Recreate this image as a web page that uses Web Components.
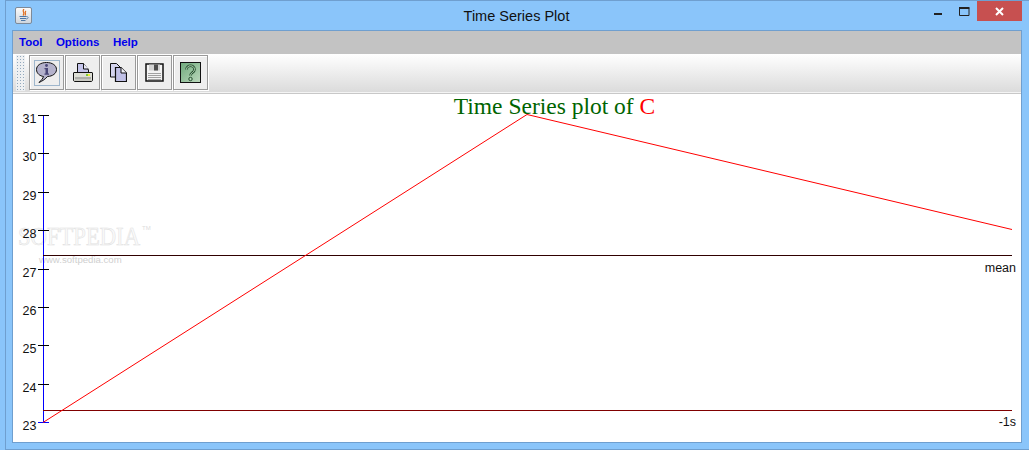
<!DOCTYPE html>
<html>
<head>
<meta charset="utf-8">
<title>Time Series Plot</title>
<style>
  html, body { margin: 0; padding: 0; background: #8ac5fa; }
  body { width: 1029px; height: 450px; overflow: hidden; }
</style>
</head>
<body>
<app-window>
  <title-bar slot="title">Time Series Plot</title-bar>
  <menu-bar slot="menu">
    <span>Tool</span>
    <span>Options</span>
    <span>Help</span>
  </menu-bar>
  <tool-bar slot="tools">
    <tool-button active>
      <svg width="21" height="21" viewBox="0 0 21 21">
        <path d="M10.500 .5C4.500 .5 .5 3.500 .5 7.500C.5 11.500 4 14 7.500 14.500C7 16.500 5 18.500 3 20.500C6.500 19 9.500 17 11.500 14.500C16.500 14.300 20.500 11.500 20.500 7.500C20.500 3.500 16.500 .5 10.500 .5Z" fill="#b4b2cc" stroke="#111"/>
        <circle cx="10.500" cy="3.500" r="1.400" fill="#4a4778"/>
        <path d="M8.500 6h3.500v5.500h1v1.200H8.500v-1.200h1V7.200h-1Z" fill="#4a4778"/>
      </svg>
    </tool-button>
    <tool-button>
      <svg width="20" height="20" viewBox="0 0 20 20">
        <path d="M4.500 .5H10.500L15.500 7V9.500H4.500Z" fill="#c4c4ea" stroke="#111"/>
        <path d="M10.500 .5V6H15.500" fill="#e9e9f7" stroke="#111"/>
        <path d="M1 9.500H19C19.400 9.500 19.500 9.800 19.500 10V17C19.500 17.700 19.200 18.500 18 18.500H2C.8 18.500 .5 17.700 .5 17V10C.5 9.800.6 9.500 1 9.500Z" fill="#dedfd6" stroke="#111"/>
        <path d="M2 15H18" stroke="#7d7d7d"/>
        <path d="M2 17H18" stroke="#b2b2ac"/>
        <rect x="13" y="11" width="2" height="2" fill="#7cc93a"/>
        <rect x="15" y="11" width="2" height="2" fill="#f0ec35"/>
      </svg>
    </tool-button>
    <tool-button>
      <svg width="17" height="19" viewBox="0 0 17 19">
        <path d="M.5 .5H6.500L10 4V14H.5Z" fill="#d4d4ee" stroke="#111"/>
        <path d="M5.500 4.500H11L16.500 10V18.500H5.500Z" fill="#c0c0e6" stroke="#111" stroke-width="1.200"/>
        <path d="M11 4.500V10H16.500" fill="#f2f2fa" stroke="#111"/>
      </svg>
    </tool-button>
    <tool-button>
      <svg width="19" height="19" viewBox="0 0 19 19">
        <path d="M1 1H18V18H1Z" fill="#f4f4f4" stroke="#111" stroke-width="1.500"/>
        <rect x="4" y="1.500" width="11" height="6" fill="#d2d2d2"/>
        <rect x="9" y="1.500" width="4" height="6" fill="#4c4c4c"/>
        <path d="M3 10.500H16M3 12.500H16M3 14.500H16M3 16.500H16" stroke="#a2a2a2"/>
      </svg>
    </tool-button>
    <tool-button>
      <svg width="21" height="21" viewBox="0 0 21 21">
        <defs>
          <linearGradient id="helpfill" x1="0" y1="0" x2="1" y2="1">
            <stop offset="0" stop-color="#6fa97c"/>
            <stop offset="1" stop-color="#bcd9bd"/>
          </linearGradient>
        </defs>
        <rect x=".5" y=".5" width="20" height="20" fill="url(#helpfill)" stroke="#111"/>
        <path d="M6.500 7.500C6.500 2.500 14.500 2.500 14.500 7.500C14.500 10.500 10.500 10.500 10.500 13.500" fill="none" stroke="#234a2c" stroke-width="2.600"/>
        <path d="M6.500 7.500C6.500 2.500 14.500 2.500 14.500 7.500C14.500 10.500 10.500 10.500 10.500 13.500" fill="none" stroke="#b4dab8" stroke-width="1"/>
        <circle cx="10.500" cy="17" r="1.700" fill="#b4dab8" stroke="#234a2c"/>
      </svg>
    </tool-button>
  </tool-bar>
  <plot-view slot="plot"></plot-view>
</app-window>

<script>
class AppWindow extends HTMLElement {
  constructor() {
    super();
    this.attachShadow({ mode: 'open' });
  }

  connectedCallback() {
    this.shadowRoot.innerHTML = `
      <style>
        :host {
          display: flex;
          flex-direction: column;
          box-sizing: border-box;
          width: 1024px;
          height: 450px;
          margin-left: 5px;
          border: 1px solid #6f9fcf;
          border-right: 0;
          background: #8ac5fa;
          padding: 0 7px 6px 6px;
          font-family: "Liberation Sans", Arial, sans-serif;
        }
        .frame {
          flex: 1;
          min-height: 0;
          display: flex;
          flex-direction: column;
          border: 1px solid #6f9fcf;
          background: #fff;
        }
      </style>
      <slot name="title"></slot>
      <div class="frame">
        <slot name="menu"></slot>
        <slot name="tools"></slot>
        <slot name="plot"></slot>
      </div>
    `;
  }
}

class TitleBar extends HTMLElement {
  constructor() {
    super();
    this.attachShadow({ mode: 'open' });
  }

  connectedCallback() {
    this.shadowRoot.innerHTML = `
      <style>
        :host {
          display: flex;
          align-items: flex-start;
          height: 29px;
          flex: none;
          font-size: 14.500px;
          color: #111;
        }
        .icon {
          width: 15px;
          height: 15px;
          margin: 6px 0 0 3px;
          border: 1px solid #7d8a99;
          border-radius: 2px;
          background: linear-gradient(#fafafa, #cfd6de);
          display: flex;
          align-items: center;
          justify-content: center;
        }
        .title {
          flex: 1;
          text-align: center;
          padding-top: 7px;
          padding-left: 76px;
        }
        .controls {
          display: flex;
        }
        .ctl {
          width: 26px;
          height: 20px;
          display: flex;
          align-items: center;
          justify-content: center;
        }
        .close {
          width: 45px;
          background: #c75050;
        }
      </style>
      <div class="icon">
        <svg width="13" height="13" viewBox="0 0 13 13">
          <path d="M7 0C4.500 2.500 8.500 3.500 6 6.500M9 2C7 3.500 9.500 4.500 8 6.500" fill="none" stroke="#df6f22" stroke-width="1.200"/>
          <path d="M2.500 7.500H9.500M3 9.500H9M4 11.500H8.500" stroke="#4d78a8"/>
          <path d="M9.500 7.500C12 7.500 11.500 10 9 10" fill="none" stroke="#4d78a8" stroke-width=".8"/>
        </svg>
      </div>
      <div class="title"><slot></slot></div>
      <div class="controls">
        <div class="ctl">
          <svg width="10" height="10" viewBox="0 0 10 10"><rect x="1" y="7" width="8" height="2" fill="#222"/></svg>
        </div>
        <div class="ctl">
          <svg width="11" height="9" viewBox="0 0 11 9"><path d="M.5 1.500H10V8.500H.5Z" fill="none" stroke="#222"/><rect x="0" y="0" width="10.500" height="2" fill="#222"/></svg>
        </div>
        <div class="ctl close">
          <svg width="9" height="9" viewBox="0 0 9 9"><path d="M1 1L8 8M8 1L1 8" stroke="#fff" stroke-width="2"/></svg>
        </div>
      </div>
    `;
  }
}

class MenuBar extends HTMLElement {
  constructor() {
    super();
    this.attachShadow({ mode: 'open' });
  }

  connectedCallback() {
    this.shadowRoot.innerHTML = `
      <style>
        :host {
          display: flex;
          align-items: center;
          gap: 13.500px;
          box-sizing: border-box;
          height: 23px;
          flex: none;
          padding: 0 0 2px 6px;
          background: #c3c3c3;
          color: #0000ee;
          font-size: 11.500px;
          font-weight: bold;
        }
      </style>
      <slot></slot>
    `;
  }
}

class ToolBar extends HTMLElement {
  constructor() {
    super();
    this.attachShadow({ mode: 'open' });
  }

  connectedCallback() {
    this.shadowRoot.innerHTML = `
      <style>
        :host {
          display: flex;
          align-items: flex-start;
          box-sizing: border-box;
          height: 40px;
          flex: none;
          padding: 1px 0 0 3px;
          background: linear-gradient(#fff, #dadada);
          border-bottom: 1px solid #c8c8c8;
          box-shadow: inset 0 -1px 0 #f4f4f4;
        }
        .grip {
          width: 9px;
          height: 36px;
          margin-right: 4px;
          background-image: radial-gradient(#92a8bc 0.8px, transparent 0.9px);
          background-size: 3px 3px;
          background-color: #eef0f2;
        }
        .buttons {
          display: flex;
          gap: 1px;
        }
      </style>
      <div class="grip"></div>
      <div class="buttons"><slot></slot></div>
    `;
  }
}

class ToolButton extends HTMLElement {
  constructor() {
    super();
    this.attachShadow({ mode: 'open' });
  }

  connectedCallback() {
    this.shadowRoot.innerHTML = `
      <style>
        :host {
          display: flex;
          align-items: center;
          justify-content: center;
          box-sizing: border-box;
          width: 35px;
          height: 35px;
          background: #eeeeee;
          border: 1px solid #9a9a9a;
          box-shadow: inset 1px 1px 0 #fff, 1px 1px 0 #fff;
        }
        .inner {
          box-sizing: border-box;
          width: 26px;
          height: 26px;
          display: flex;
          align-items: center;
          justify-content: center;
        }
        :host([active]) .inner {
          border: 1px solid #9eb6cc;
        }
      </style>
      <div class="inner"><slot></slot></div>
    `;
  }
}

class PlotView extends HTMLElement {
  constructor() {
    super();
    this.attachShadow({ mode: 'open' });
  }

  connectedCallback() {
    // y = pixel position inside this element, it starts at y=94 on the page
    const top = 94;
    const ticks = [];
    for (let i = 0; i <= 8; i++) {
      const y = Math.round(422 - i * 38.375) - top + 0.5;
      const color = i === 0 ? '#0000ff' : '#000';
      ticks.push(`<line x1="25" x2="36" y1="${y}" y2="${y}" stroke="${color}"/>`);
      ticks.push(`<text x="23.500" y="${y + 7}" text-anchor="end">${23 + i}</text>`);
    }

    this.shadowRoot.innerHTML = `
      <style>
        :host {
          display: block;
          flex: 1;
          min-height: 0;
          position: relative;
          background: #fff;
        }
        svg {
          position: absolute;
          left: 0;
          top: 0;
          font-family: "Liberation Sans", Arial, sans-serif;
          font-size: 12.500px;
          fill: #111;
        }
        .heading {
          position: absolute;
          left: 0;
          right: 0;
          top: -1px;
          padding-left: 75px;
          text-align: center;
          font-family: "Liberation Serif", "Times New Roman", serif;
          font-size: 23.500px;
          line-height: 26px;
          color: #006400;
        }
        .heading b {
          font-weight: normal;
          color: #ff0000;
        }
        .mark {
          font-family: "Liberation Serif", serif;
          font-size: 25px;
          fill: #fbfbfb;
          stroke: #e2e2e2;
          stroke-width: .6px;
        }
        .mark-tm {
          font-size: 6px;
          fill: #dddddd;
        }
        .mark-small {
          font-size: 9.600px;
          fill: #cfcfcf;
        }
      </style>
      <svg width="1008" height="348" viewBox="0 0 1008 348">
        <text class="mark" x="5" y="151" textLength="122" lengthAdjust="spacingAndGlyphs">SOFTPEDIA</text>
        <text class="mark-tm" x="129" y="136">TM</text>
        <text class="mark-small" x="26" y="169">www.softpedia.com</text>
        <line x1="30.500" x2="30.500" y1="21" y2="329" stroke="#0000ff"/>
        ${ticks.join('')}
        <line x1="30" x2="999" y1="161.500" y2="161.500" stroke="#300000"/>
        <line x1="30" x2="999" y1="316.500" y2="316.500" stroke="#800000"/>
        <polyline points="30,328.500 514,20.500 999,135.500" fill="none" stroke="#ff0000"/>
        <text x="1003" y="178" text-anchor="end">mean</text>
        <text x="1003" y="332" text-anchor="end">-1s</text>
      </svg>
      <div class="heading">Time Series plot of <b>C</b></div>
    `;
  }
}

customElements.define('app-window', AppWindow);
customElements.define('title-bar', TitleBar);
customElements.define('menu-bar', MenuBar);
customElements.define('tool-bar', ToolBar);
customElements.define('tool-button', ToolButton);
customElements.define('plot-view', PlotView);
</script>
</body>
</html>
